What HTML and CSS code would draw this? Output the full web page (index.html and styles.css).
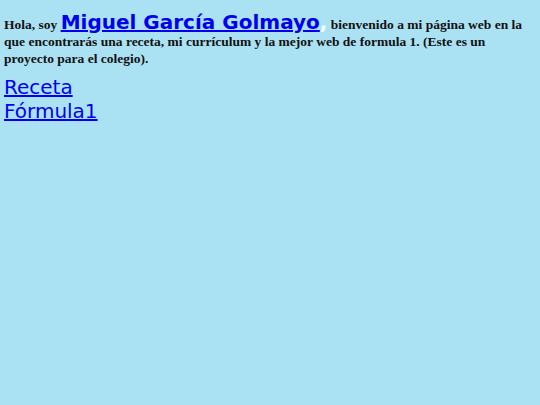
FILE: index.html
```html
<!DOCTYPE html>
<html lang="es">
<head>
<meta charset="utf-8">
<title>Miguel García Golmayo</title>
<link rel="stylesheet" href="styles.css">
</head>
<body>
<p class="intro">Hola, soy <a class="name" href="#">Miguel García Golmayo</a><span class="comma">,</span> bienvenido a mi página web en la que encontrarás una receta, mi currículum y la mejor web de formula 1. (Este es un proyecto para el colegio).</p>
<div class="links">
<a class="link" href="#">Receta</a>
<a class="link" href="#">Fórmula1</a>
</div>
</body>
</html>
```
FILE: styles.css
```css
html, body {
  background: #abe2f3;
}
body {
  margin: 0;
  padding: 4px;
  font-family: "Liberation Serif", serif;
}
.intro {
  margin: 7px 0 0 0;
  font-weight: bold;
  font-size: 13.5px;
  line-height: 16.5px;
  color: #111;
}
.name {
  font-family: "DejaVu Sans", sans-serif;
  font-size: 20px;
  line-height: 23px;
  color: #0000ee;
}
.comma {
  font-family: "DejaVu Sans", sans-serif;
  font-size: 20px;
  line-height: 23px;
  color: #fff;
}
.links {
  margin-top: 8px;
  display: flex;
  flex-direction: column;
  align-items: flex-start;
  line-height: 24px;
}
.link {
  font-family: "DejaVu Sans", sans-serif;
  font-size: 20px;
  color: #0000ee;
}
```
